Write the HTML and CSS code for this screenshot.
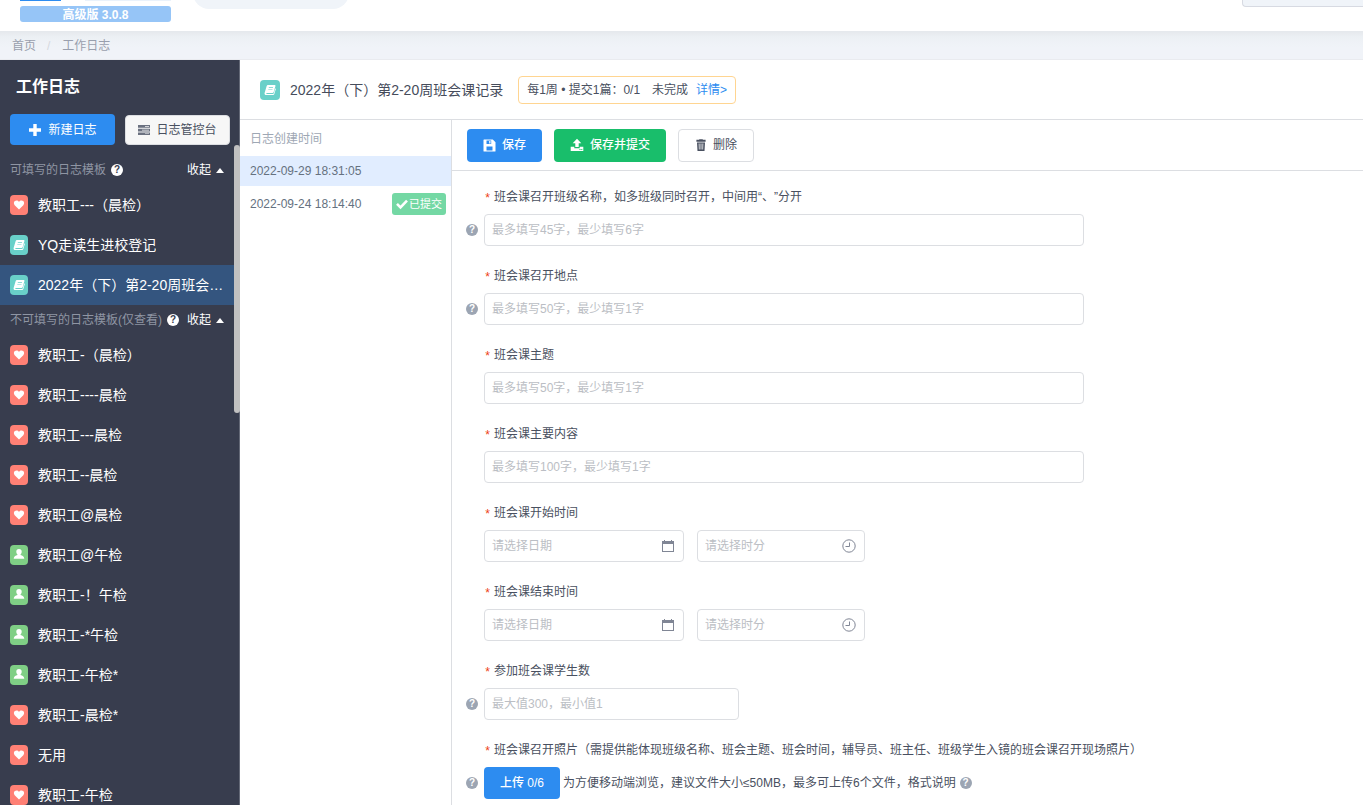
FILE: index.html
```
<!DOCTYPE html>
<html lang="zh-CN">
<head>
<meta charset="utf-8">
<title>工作日志</title>
<link rel="stylesheet" href="styles.css">
</head>
<body>
<svg class="sprite" aria-hidden="true">
  <symbol id="heart" viewBox="0 0 12 12"><path fill="currentColor" d="M6 10.6 1.7 6.2C.5 4.900.6 3 1.900 2.100 3.300 1.100 5 1.500 6 2.900 7 1.500 8.700 1.100 10.100 2.100 11.400 3 11.500 4.900 10.300 6.200Z"/></symbol>
  <symbol id="book" viewBox="0 0 12 12"><path fill="currentColor" fill-rule="evenodd" d="M4.200 1h6.300c.8 0 1.100.5.900 1.200L9.700 8.100c-.2.600-.6.900-1.200.900H2.700c-.6 0-.6.900 0 .9h6.200c.5 0 .8-.2.900-.6l1.500-5c.5.2.6.6.5 1L10.300 10c-.2.700-.8 1.100-1.500 1.100H2.200C1 11.100.3 10 .6 9L2.600 2.300C2.900 1.400 3.400 1 4.200 1ZM4.900 3.100l-.2.700h4.200l.2-.7ZM4.400 4.900l-.2.700h4.200l.2-.7Z"/></symbol>
  <symbol id="person" viewBox="0 0 12 12"><path fill="currentColor" d="M6 0a2.700 2.700 0 0 1 2.700 2.800c0 1.200-.5 2.100-1.200 2.700v.5c2.200.4 3.600 1.400 3.800 3.700H.7C.9 7.400 2.300 6.400 4.500 6v-.5C3.800 4.900 3.300 4 3.300 2.800A2.700 2.700 0 0 1 6 0Z"/></symbol>
  <symbol id="plus" viewBox="0 0 14 14"><path fill="currentColor" d="M5.300 1h3.400v4.300H13v3.400H8.700V13H5.300V8.700H1V5.300h4.300Z"/></symbol>
  <symbol id="server" viewBox="0 0 12 12"><path fill="currentColor" fill-rule="evenodd" d="M0 1h12v2.700H0ZM0 4.700h12v2.700H0ZM0 8.400h12v2.700H0ZM7 2v.7h4V2ZM4 5.700v.7h7v-.7ZM7 9.400v.7h4v-.7Z"/></symbol>
  <symbol id="save" viewBox="0 0 13 13"><path fill="currentColor" fill-rule="evenodd" d="M1 .5h8.800L12.500 3.200V12a.5.5 0 0 1-.5.500H1A.5.5 0 0 1 .5 12V1A.5.5 0 0 1 1 .5ZM3.500 1.500v3.500h4.700V1.500ZM3.500 7.500v4h6v-4ZM6.200 2h1.300v2.400H6.200Z"/></symbol>
  <symbol id="upload" viewBox="0 0 14 14"><path fill="currentColor" fill-rule="evenodd" d="M7 .8 11.300 5.200H8.700v3.900H5.300V5.200H2.700ZM.7 8.700h3.600v1.600h5.400V8.700h3.600v4.200H.7ZM9.500 11.100v.8h1v-.8ZM11.300 11.100v.8h1v-.8Z"/></symbol>
  <symbol id="trash" viewBox="0 0 12 12"><path fill="currentColor" fill-rule="evenodd" d="M4 .8 4.400.2h3.200L8 .8h2.600v2H1.400v-2ZM2 3.400h8L9.500 12h-7ZM3.700 4.500l.2 6h.7l-.1-6ZM5.600 4.500v6h.8v-6ZM7.500 4.500l-.1 6h.7l.2-6Z"/></symbol>
  <symbol id="check" viewBox="0 0 12 12"><path fill="none" stroke="currentColor" stroke-width="2.600" d="M1 5.800 4.500 9.300 11 2.600"/></symbol>
  <symbol id="calendar" viewBox="0 0 14 14"><path fill="currentColor" fill-rule="evenodd" d="M1 2h2V1h1v1h6V1h1v1h2v11H1ZM2 5v7h10V5Z"/></symbol>
  <symbol id="clock" viewBox="0 0 14 14"><g fill="none" stroke="currentColor"><circle cx="7" cy="7" r="6.200"/><path d="M7.500 3.500v4h-4"/></g></symbol>
</svg>

<header class="topbar">
  <div class="brand">
    <div class="brand-name"><span class="brand-mark"></span><span class="brand-line"></span></div>
    <span class="edition">高级版 3.0.8</span>
  </div>
  <input class="top-search" type="search" aria-label="搜索">
  <button class="top-select" type="button" aria-label="切换"></button>
</header>

<nav class="crumbs">
  <a href="#">首页</a><span class="slash">/</span><a href="#">工作日志</a>
</nav>

<div class="page">
  <aside class="sidebar">
    <h1 class="side-title">工作日志</h1>
    <div class="side-actions">
      <button class="side-btn primary" type="button"><svg class="i14"><use href="#plus"/></svg>新建日志</button>
      <button class="side-btn plain" type="button"><svg class="i12"><use href="#server"/></svg>日志管控台</button>
    </div>
    <div class="side-scroll">
      <div class="side-list">
        <div class="group"><span>可填写的日志模板</span><span class="help light">?</span><button class="fold" type="button">收起<i class="caret"></i></button></div>
        <a class="item" href="#"><span class="badge red"><svg class="i12"><use href="#heart"/></svg></span><span class="name">教职工---（晨检）</span></a>
        <a class="item" href="#"><span class="badge teal"><svg class="i12"><use href="#book"/></svg></span><span class="name">YQ走读生进校登记</span></a>
        <a class="item current" href="#"><span class="badge teal"><svg class="i12"><use href="#book"/></svg></span><span class="name">2022年（下）第2-20周班会课记录</span></a>
        <div class="group"><span>不可填写的日志模板(仅查看)</span><span class="help light">?</span><button class="fold" type="button">收起<i class="caret"></i></button></div>
        <a class="item" href="#"><span class="badge red"><svg class="i12"><use href="#heart"/></svg></span><span class="name">教职工-（晨检）</span></a>
        <a class="item" href="#"><span class="badge red"><svg class="i12"><use href="#heart"/></svg></span><span class="name">教职工----晨检</span></a>
        <a class="item" href="#"><span class="badge red"><svg class="i12"><use href="#heart"/></svg></span><span class="name">教职工---晨检</span></a>
        <a class="item" href="#"><span class="badge red"><svg class="i12"><use href="#heart"/></svg></span><span class="name">教职工--晨检</span></a>
        <a class="item" href="#"><span class="badge red"><svg class="i12"><use href="#heart"/></svg></span><span class="name">教职工@晨检</span></a>
        <a class="item" href="#"><span class="badge green"><svg class="i12"><use href="#person"/></svg></span><span class="name">教职工@午检</span></a>
        <a class="item" href="#"><span class="badge green"><svg class="i12"><use href="#person"/></svg></span><span class="name">教职工-！午检</span></a>
        <a class="item" href="#"><span class="badge green"><svg class="i12"><use href="#person"/></svg></span><span class="name">教职工-*午检</span></a>
        <a class="item" href="#"><span class="badge green"><svg class="i12"><use href="#person"/></svg></span><span class="name">教职工-午检*</span></a>
        <a class="item" href="#"><span class="badge red"><svg class="i12"><use href="#heart"/></svg></span><span class="name">教职工-晨检*</span></a>
        <a class="item" href="#"><span class="badge red"><svg class="i12"><use href="#heart"/></svg></span><span class="name">无用</span></a>
        <a class="item" href="#"><span class="badge red"><svg class="i12"><use href="#heart"/></svg></span><span class="name">教职工-午检</span></a>
      </div>
      <div class="thumb"></div>
    </div>
  </aside>

  <main class="main">
    <div class="main-head">
      <span class="badge teal large"><svg class="i12"><use href="#book"/></svg></span>
      <h2 class="main-title">2022年（下）第2-20周班会课记录</h2>
      <div class="quota"><span>每1周 • 提交1篇：0/1</span><span class="state">未完成</span><a href="#">详情&gt;</a></div>
    </div>
    <div class="columns">
      <section class="logs">
        <div class="logs-head">日志创建时间</div>
        <a class="log current" href="#">2022-09-29 18:31:05</a>
        <a class="log" href="#">2022-09-24 18:14:40<span class="done"><svg class="i12"><use href="#check"/></svg>已提交</span></a>
      </section>
      <section class="editor">
        <div class="toolbar">
          <button class="btn blue" type="button"><svg class="i13"><use href="#save"/></svg>保存</button>
          <button class="btn emerald" type="button"><svg class="i14"><use href="#upload"/></svg>保存并提交</button>
          <button class="btn ghost" type="button"><svg class="i12"><use href="#trash"/></svg>删除</button>
        </div>
        <form class="form">
          <div class="field">
            <label class="label" for="f1"><span class="star">*</span>班会课召开班级名称，如多班级同时召开，中间用“、”分开</label>
            <div class="row"><span class="help">?</span><input class="box wide" id="f1" type="text" placeholder="最多填写45字，最少填写6字"></div>
          </div>
          <div class="field">
            <label class="label" for="f2"><span class="star">*</span>班会课召开地点</label>
            <div class="row"><span class="help">?</span><input class="box wide" id="f2" type="text" placeholder="最多填写50字，最少填写1字"></div>
          </div>
          <div class="field">
            <label class="label" for="f3"><span class="star">*</span>班会课主题</label>
            <div class="row"><input class="box wide" id="f3" type="text" placeholder="最多填写50字，最少填写1字"></div>
          </div>
          <div class="field">
            <label class="label" for="f4"><span class="star">*</span>班会课主要内容</label>
            <div class="row"><input class="box wide" id="f4" type="text" placeholder="最多填写100字，最少填写1字"></div>
          </div>
          <div class="field">
            <label class="label" for="f5"><span class="star">*</span>班会课开始时间</label>
            <div class="row pickers">
              <span class="picker date"><input class="box" id="f5" type="text" placeholder="请选择日期"><svg class="i14"><use href="#calendar"/></svg></span>
              <span class="picker time"><input class="box" type="text" aria-label="开始时分" placeholder="请选择时分"><svg class="i14"><use href="#clock"/></svg></span>
            </div>
          </div>
          <div class="field">
            <label class="label" for="f6"><span class="star">*</span>班会课结束时间</label>
            <div class="row pickers">
              <span class="picker date"><input class="box" id="f6" type="text" placeholder="请选择日期"><svg class="i14"><use href="#calendar"/></svg></span>
              <span class="picker time"><input class="box" type="text" aria-label="结束时分" placeholder="请选择时分"><svg class="i14"><use href="#clock"/></svg></span>
            </div>
          </div>
          <div class="field">
            <label class="label" for="f7"><span class="star">*</span>参加班会课学生数</label>
            <div class="row"><span class="help">?</span><input class="box number" id="f7" type="text" inputmode="numeric" placeholder="最大值300，最小值1"></div>
          </div>
          <div class="field">
            <label class="label" for="f8"><span class="star">*</span>班会课召开照片（需提供能体现班级名称、班会主题、班会时间，辅导员、班主任、班级学生入镜的班会课召开现场照片）</label>
            <div class="row"><span class="help">?</span><button class="btn blue upload" id="f8" type="button">上传 0/6</button><span class="note">为方便移动端浏览，建议文件大小≤50MB，最多可上传6个文件，格式说明</span><span class="help tail">?</span></div>
          </div>
        </form>
      </section>
    </div>
  </main>
</div>
</body>
</html>
```
FILE: styles.css
```
* { box-sizing: border-box; }

body {
  margin: 0;
  height: 100vh;
  display: flex;
  flex-direction: column;
  overflow: hidden;
  background: #fff;
  color: #495060;
  font: 12px/20px "Liberation Sans", "Noto Sans CJK SC", sans-serif;
  text-spacing-trim: space-all;
}

a { color: inherit; text-decoration: none; }
button, input { font: inherit; color: inherit; }
button { padding: 0; border: 0; background: none; cursor: pointer; white-space: nowrap; }

.sprite { position: absolute; width: 0; height: 0; }
.i12 { width: 12px; height: 12px; flex: none; }
.i13 { width: 13px; height: 13px; flex: none; }
.i14 { width: 14px; height: 14px; flex: none; }

/* Top bar */
.topbar {
  display: flex;
  align-items: flex-start;
  flex: none;
  height: 31px;
  padding-left: 20px;
  overflow: hidden;
  background: #fff;
}
.brand { width: 151px; }
.brand-name { display: flex; gap: 24px; height: 6px; }
.brand-mark { width: 41px; height: 1px; background: #2d8cf0; }
.brand-line { flex: 1; height: 1px; background: #eaf2fb; }
.edition {
  display: block;
  height: 16px;
  border-radius: 3px;
  background: #96c5f7;
  color: #fff;
  font-weight: bold;
  line-height: 18px;
  text-align: center;
}
.top-search {
  width: 156px;
  height: 32px;
  margin: -23px 0 0 22px;
  border: 0;
  border-radius: 16px;
  background: #f0f4f9;
}
.top-select {
  width: 121px;
  height: 32px;
  margin: -25px 0 0 auto;
  border: 1px solid #d7dae2;
  border-right: 0;
  border-radius: 4px 0 0 4px;
  background: #f0f4f9;
}

.crumbs {
  display: flex;
  align-items: center;
  flex: none;
  height: 29px;
  padding: 2px 0 0 12px;
  background: linear-gradient(#e5e8ec, #ecf0f4 6px, #f0f3f8 16px);
  border-bottom: 1px solid #e9ebef;
  color: #999fad;
}
.slash { padding: 0 12px 0 11px; color: #d5d8de; }

.page { display: flex; flex: 1; min-height: 0; }

/* Sidebar */
.sidebar {
  display: flex;
  flex-direction: column;
  flex: none;
  width: 240px;
  border-right: 1px solid #646977;
  background: #383d4e;
  color: #fff;
}
.side-title { margin: 17px 16px; font-size: 16px; line-height: 20px; }
.side-actions { display: flex; gap: 10px; padding: 0 9px 0 10px; }
.side-btn {
  display: flex;
  align-items: center;
  justify-content: center;
  gap: 6px;
  width: 105px;
  height: 31px;
  border-radius: 4px;
}
.primary { background: #2d8cf0; }
.plain {
  height: 30px;
  margin-top: 1px;
  border: 1px solid #dcdee2;
  background: #f7f7f7;
  color: #495060;
}
.plain svg { color: #6b7180; }
.side-scroll { position: relative; flex: 1; min-height: 0; }
.side-list { height: 100%; margin-right: 5px; padding-top: 10px; overflow: hidden; }
.thumb {
  position: absolute;
  top: 0;
  right: -1px;
  width: 6px;
  height: 268px;
  border-radius: 3px;
  background: #c1c1c1;
}
.group {
  display: flex;
  align-items: center;
  gap: 5px;
  height: 30px;
  padding: 0 10px;
  color: #8f95a3;
}
.fold {
  display: flex;
  align-items: center;
  gap: 5px;
  margin-left: auto;
  color: #fff;
}
.caret {
  border: 4px solid transparent;
  border-top: 0;
  border-bottom: 5px solid #fff;
}
.item {
  display: flex;
  align-items: center;
  gap: 10px;
  height: 40px;
  padding: 0 10px;
  font-size: 14px;
}
.item.current { background: #34557f; }
.name { overflow: hidden; text-overflow: ellipsis; white-space: nowrap; }

.badge {
  display: flex;
  align-items: center;
  justify-content: center;
  flex: none;
  width: 18px;
  height: 20px;
  border-radius: 4px;
  color: #fff;
}
.badge.large { width: 20px; }
.red { background: #ff8075; }
.teal { background: #69d0c9; }
.green { background: #7fcf85; }

.help {
  flex: none;
  width: 12px;
  height: 12px;
  border-radius: 50%;
  background: #9ca5b3;
  color: #fff;
  font-size: 10px;
  font-weight: bold;
  line-height: 12px;
  text-align: center;
}
.help.light { background: #fff; color: #383d4e; }

/* Main panel */
.main { display: flex; flex-direction: column; flex: 1; min-width: 0; }
.main-head {
  display: flex;
  align-items: center;
  flex: none;
  height: 60px;
  padding-left: 20px;
  border-bottom: 1px solid #dcdee2;
}
.main-title { margin: 0 15px 0 10px; color: #464c5b; font-size: 14px; font-weight: normal; }
.quota {
  display: flex;
  height: 28px;
  padding: 0 8px;
  border: 1px solid #ffd591;
  border-radius: 4px;
  line-height: 26px;
}
.quota a { color: #2d8cf0; }
.state { margin: 0 8px 0 12px; }

.columns { display: flex; flex: 1; min-height: 0; }
.logs { flex: none; width: 212px; border-right: 1px solid #dcdee2; color: #657180; }
.logs-head { height: 36px; padding-left: 10px; color: #9ea7b4; line-height: 38px; }
.log {
  display: flex;
  align-items: center;
  justify-content: space-between;
  height: 36px;
  padding: 0 5px 0 10px;
}
.log.current { height: 30px; background: #e1edff; }
.done {
  display: flex;
  align-items: center;
  gap: 1px;
  height: 22px;
  padding: 0 4px;
  border-radius: 3px;
  background: #74d8a4;
  color: #fff;
  font-size: 11px;
}

.editor { flex: 1; min-width: 0; }
.toolbar {
  display: flex;
  align-items: center;
  gap: 12px;
  height: 51px;
  padding-left: 15px;
  border-bottom: 1px solid #dcdee2;
}
.btn {
  display: flex;
  align-items: center;
  gap: 6px;
  height: 33px;
  padding: 0 16px;
  border-radius: 4px;
}
.blue { background: #2d8cf0; color: #fff; font-weight: 500; }
.emerald { background: #19be6b; color: #fff; font-weight: 500; }
.ghost { border: 1px solid #dcdee2; }

.form { display: grid; gap: 20px; padding: 16px 14px; }
.field { display: grid; gap: 7px; padding-left: 18px; }
.label { display: flex; height: 20px; white-space: nowrap; }
.star { width: 10px; color: #ed4014; font-family: "Liberation Mono", monospace; line-height: 24px; }
.row { display: flex; align-items: center; }
.row > .help { margin: 0 6px 0 -18px; }
.row > .help.tail { margin: 0 0 0 4px; }
.pickers { gap: 13px; }
.box {
  width: 100%;
  height: 32px;
  padding: 0 7px;
  border: 1px solid #dcdee2;
  border-radius: 4px;
  background: #fff;
}
.box::placeholder { color: #bbbec4; }
.wide { max-width: 600px; }
.number { max-width: 255px; }
.picker { position: relative; color: #808695; }
.picker svg { position: absolute; top: 9px; right: 9px; }
.date { width: 200px; }
.time { width: 168px; }
.upload { height: 32px; }
.note { margin-left: 3px; white-space: nowrap; }
```
